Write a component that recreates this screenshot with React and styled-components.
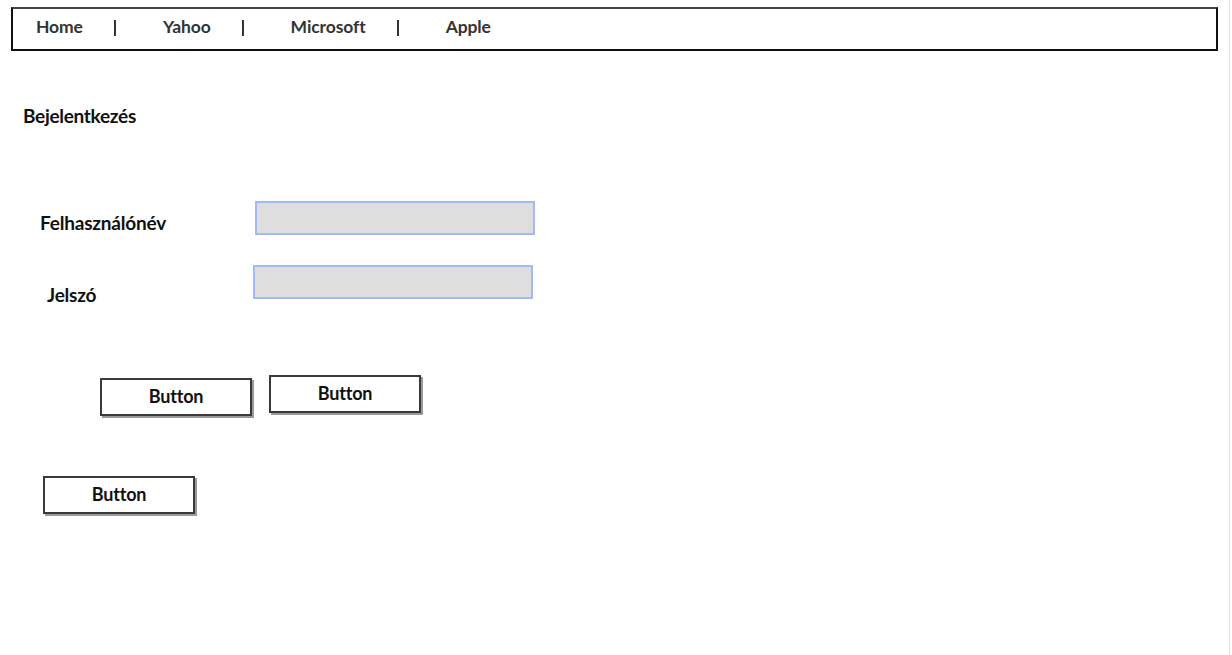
import styled, { createGlobalStyle } from 'styled-components';

const GlobalStyle = createGlobalStyle`
  html, body {
    margin: 0;
    padding: 0;
    background: #fff;
  }
  body {
    font-family: 'Lato', 'Open Sans', sans-serif;
  }
`;

const Page = styled.div`
  width: 1230px;
  height: 655px;
  border-right: 1px solid #dcdcdc;
  box-sizing: border-box;
  padding-top: 7px;
`;

const NavBar = styled.nav`
  margin-left: 11px;
  width: 1207px;
  height: 44px;
  box-sizing: border-box;
  border: 2px solid #111;
  border-top-color: #444;
  display: flex;
  align-items: center;
  padding-left: 23px;
  padding-bottom: 5px;
`;

const NavItem = styled.span`
  font-size: 17.5px;
  font-weight: 700;
  color: #333;
  letter-spacing: -0.1px;
`;

const Divider = styled.span`
  width: 2px;
  height: 16px;
  background: #333;
  margin: 2px 47px 0 31px;
`;

const Heading = styled.h1`
  margin: 53px 0 0 23px;
  font-size: 19px;
  line-height: 24px;
  font-weight: 700;
  color: #111;
  letter-spacing: -0.3px;
`;

const FieldRow = styled.div`
  display: flex;
  align-items: flex-start;
  height: 34px;
  margin-top: ${(p) => p.$top}px;
  padding-left: ${(p) => p.$left}px;
`;

const Label = styled.label`
  width: ${(p) => p.$width}px;
  margin-top: ${(p) => p.$offset}px;
  font-size: 19px;
  line-height: 24px;
  font-weight: 700;
  color: #111;
  letter-spacing: -0.2px;
`;

const Input = styled.div`
  width: 280px;
  height: 34px;
  box-sizing: border-box;
  background: #dedede;
  border: 2px solid #a3b9f8;
`;

const ButtonRow = styled.div`
  display: flex;
  align-items: flex-start;
  gap: 17px;
  margin-top: ${(p) => p.$top}px;
  padding-left: ${(p) => p.$left}px;
`;

const Button = styled.button`
  width: 152px;
  height: 38px;
  margin-top: ${(p) => p.$offset || 0}px;
  box-sizing: border-box;
  background: #fff;
  border: 2px solid #3a3a3a;
  box-shadow: 2px 2px 0 #9a9a9a;
  font-family: inherit;
  font-size: 18px;
  font-weight: 700;
  color: #111;
  letter-spacing: -0.2px;
  padding: 0 0 3px;
  cursor: pointer;
`;

const links = ['Home', 'Yahoo', 'Microsoft', 'Apple'];

export default function App() {
  return (
    <>
      <GlobalStyle />
      <Page>
        <NavBar>
          {links.map((l, i) => (
            <span key={l} style={{ display: 'contents' }}>
              {i > 0 && <Divider />}
              <NavItem>{l}</NavItem>
            </span>
          ))}
        </NavBar>

        <Heading>Bejelentkezés</Heading>

        <FieldRow $top={73} $left={40}>
          <Label $width={215} $offset={10}>Felhasználónév</Label>
          <Input />
        </FieldRow>
        <FieldRow $top={30} $left={47}>
          <Label $width={206} $offset={18}>Jelszó</Label>
          <Input />
        </FieldRow>

        <ButtonRow $top={76} $left={100}>
          <Button $offset={3}>Button</Button>
          <Button>Button</Button>
        </ButtonRow>
        <ButtonRow $top={60} $left={43}>
          <Button>Button</Button>
        </ButtonRow>
      </Page>
    </>
  );
}
